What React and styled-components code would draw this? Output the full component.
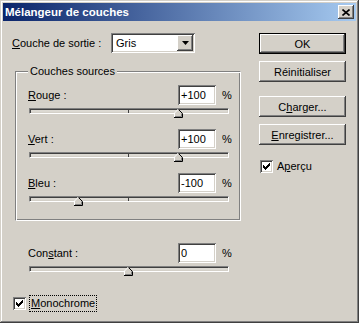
import React from "react"
import styled, { createGlobalStyle } from "styled-components"

const GlobalStyle = createGlobalStyle`
  html, body {
    margin: 0;
    padding: 0;
    background: #d4d0c8;
  }
  body {
    font-family: "Liberation Sans", Arial, sans-serif;
    font-size: 11px;
    color: #000;
  }
  * { box-sizing: border-box; }
`

const raised = `
  box-shadow: inset -1px -1px #404040, inset 1px 1px #fff, inset -2px -2px #808080, inset 2px 2px #d4d0c8;
`
const sunken = `
  box-shadow: inset 1px 1px #808080, inset -1px -1px #fff, inset 2px 2px #404040, inset -2px -2px #d4d0c8;
`

const Window = styled.div`
  width: 359px;
  height: 323px;
  padding: 3px;
  background: #d4d0c8;
  box-shadow: inset -1px -1px #404040, inset 1px 1px #d4d0c8, inset -2px -2px #808080, inset 2px 2px #fff;
  display: flex;
  flex-direction: column;
`

const TitleBar = styled.div`
  height: 18px;
  display: flex;
  align-items: center;
  justify-content: space-between;
  padding: 0 2px 0 2px;
  background: linear-gradient(to right, #0a246a, #a6caf0);
  color: #fff;
  font-weight: bold;
  font-size: 11.5px;
`

const CloseButton = styled.div`
  width: 16px;
  height: 14px;
  background: #d4d0c8;
  ${raised}
  display: flex;
  align-items: center;
  justify-content: center;
`

const Body = styled.div`
  display: flex;
  padding: 12px 0 0 9px;
`

const LeftColumn = styled.div`
  width: 229px;
  display: flex;
  flex-direction: column;
`

const OutputRow = styled.div`
  display: flex;
  align-items: center;
  height: 20px;
`

const OutputLabel = styled.span`
  width: 99px;
`

const Combo = styled.div`
  width: 84px;
  height: 20px;
  padding: 2px;
  background: #fff;
  ${sunken}
  display: flex;
  align-items: center;
  justify-content: space-between;
`

const ComboText = styled.span`
  padding-left: 3px;
`

const ComboButton = styled.div`
  width: 16px;
  height: 16px;
  background: #d4d0c8;
  ${raised}
  display: flex;
  align-items: center;
  justify-content: center;
`

const Group = styled.fieldset`
  margin: 12px 0 0 3px;
  padding: 0 0 18px 12px;
  width: 226px;
  border-style: solid;
  border-width: 1px;
  border-color: #808080 #fff #fff #808080;
  box-shadow: inset 1px 1px #fff, inset -1px -1px #808080;
  min-width: 0;
`

const Legend = styled.legend`
  padding: 0 2px;
  line-height: 13px;
  background: #d4d0c8;
`

const SliderRow = styled.div`
  width: 201px;
  margin-top: ${p => p.$top}px;
`

const Header = styled.div`
  display: grid;
  grid-template-columns: 150px 38px auto;
  align-items: center;
  height: 20px;
`

const Percent = styled.span`
  margin-left: 6px;
`

const NumberBox = styled.div`
  width: 38px;
  height: 20px;
  padding: 0 3px;
  background: #fff;
  ${sunken}
  display: flex;
  align-items: center;
`

const Track = styled.div`
  position: relative;
  margin: 3px 0 0 1px;
  width: 200px;
  height: 6px;
  background: #dcd9d2;
  border: 1px solid;
  border-color: #808080 #fff #fff #808080;
  box-shadow: inset 1px 1px #404040, inset -1px -1px #d4d0c8;
`

const Tick = styled.div`
  position: absolute;
  left: 98px;
  top: 0;
  width: 1px;
  height: 4px;
  background: #404040;
`

const Thumb = styled.svg`
  position: absolute;
  top: 0;
  width: 9px;
  height: 9px;
  overflow: visible;
`

const Key = styled.u`
  text-decoration-thickness: 1px;
  text-underline-offset: 1px;
`

const ConstantBlock = styled.div`
  margin: 22px 0 0 16px;
`

const CheckRow = styled.label`
  display: flex;
  align-items: center;
  margin: ${p => p.$margin};
`

const CheckBox = styled.div`
  width: 13px;
  height: 13px;
  background: #fff;
  ${sunken}
  display: flex;
  align-items: center;
  justify-content: center;
  flex-shrink: 0;
`

const CheckText = styled.span`
  margin-left: ${p => p.$gap}px;
  padding: 1px 1px;
  line-height: 13px;
  border: 1px ${p => (p.$focus ? "dotted #000" : "solid transparent")};
`

const RightColumn = styled.div`
  margin-left: 18px;
  width: 87px;
  display: flex;
  flex-direction: column;
`

const Button = styled.div`
  height: 21px;
  margin-top: ${p => p.$gap || 0}px;
  background: #d4d0c8;
  ${raised}
  border: ${p => (p.$default ? "1px solid #000" : "none")};
  display: flex;
  align-items: center;
  justify-content: center;
`

const checkPixels = [
  [6, 0], [5, 1], [6, 1], [0, 2], [4, 2], [5, 2], [6, 2],
  [0, 3], [1, 3], [3, 3], [4, 3], [5, 3],
  [0, 4], [1, 4], [2, 4], [3, 4], [4, 4],
  [1, 5], [2, 5], [3, 5], [2, 6],
]

function Check() {
  return (
    <CheckBox>
      <svg width="7" height="7" viewBox="0 0 7 7" shapeRendering="crispEdges">
        {checkPixels.map(([x, y]) => (
          <rect key={`${x}-${y}`} x={x} y={y} width="1" height="1" fill="#000" />
        ))}
      </svg>
    </CheckBox>
  )
}

function Slider({ value }) {
  const left = 98 + value / 2 - 4
  return (
    <Track>
      <Tick />
      <Thumb viewBox="0 0 9 9" style={{ left }}>
        <path d="M0 4 L4 0 L8 4 L8 8 L0 8 Z" fill="#d4d0c8" />
        <path d="M0.5 8 L0.5 4 L4.5 0" stroke="#fff" fill="none" />
        <path d="M4.5 0.5 L8.5 4.5 L8.5 8.5 L0 8.5" stroke="#000" fill="none" />
        <path d="M7.5 4.5 L7.5 7.5 L1 7.5" stroke="#808080" fill="none" />
      </Thumb>
    </Track>
  )
}

function Channel({ keyChar, rest, value, text, top }) {
  return (
    <SliderRow $top={top}>
      <Header>
        <span><Key>{keyChar}</Key>{rest}</span>
        <NumberBox>{text}</NumberBox>
        <Percent>%</Percent>
      </Header>
      <Slider value={value} />
    </SliderRow>
  )
}

export default function App() {
  return (
    <>
      <GlobalStyle />
      <Window>
        <TitleBar>
          <span>Mélangeur de couches</span>
          <CloseButton>
            <svg width="8" height="7" viewBox="0 0 8 7">
              <path d="M0.5 0.5 L7.5 6.5 M7.5 0.5 L0.5 6.5" stroke="#000" strokeWidth="1.6" />
            </svg>
          </CloseButton>
        </TitleBar>
        <Body>
          <LeftColumn>
            <OutputRow>
              <OutputLabel><Key>C</Key>ouche de sortie :</OutputLabel>
              <Combo>
                <ComboText>Gris</ComboText>
                <ComboButton>
                  <svg width="7" height="4" viewBox="0 0 7 4">
                    <path d="M0 0 L7 0 L3.5 4 Z" fill="#000" />
                  </svg>
                </ComboButton>
              </Combo>
            </OutputRow>
            <Group>
              <Legend>Couches sources</Legend>
              <Channel keyChar="R" rest="ouge :" value={100} text="+100" top={7} />
              <Channel keyChar="V" rest="ert :" value={100} text="+100" top={15} />
              <Channel keyChar="B" rest="leu :" value={-100} text="-100" top={15} />
            </Group>
            <ConstantBlock>
              <SliderRow $top={0}>
                <Header>
                  <span>Con<Key>s</Key>tant :</span>
                  <NumberBox>0</NumberBox>
                  <Percent>%</Percent>
                </Header>
                <Slider value={0} />
              </SliderRow>
            </ConstantBlock>
            <CheckRow $margin="23px 0 0 1px">
              <Check />
              <CheckText $gap={3} $focus><Key>M</Key>onochrome</CheckText>
            </CheckRow>
          </LeftColumn>
          <RightColumn>
            <Button $default>OK</Button>
            <Button $gap={7}>Réinitialiser</Button>
            <Button $gap={14}>C<Key>h</Key>arger...</Button>
            <Button $gap={7}><Key>E</Key>nregistrer...</Button>
            <CheckRow $margin="13px 0 0 1px">
              <Check />
              <CheckText $gap={2}>A<Key>p</Key>erçu</CheckText>
            </CheckRow>
          </RightColumn>
        </Body>
      </Window>
    </>
  )
}
